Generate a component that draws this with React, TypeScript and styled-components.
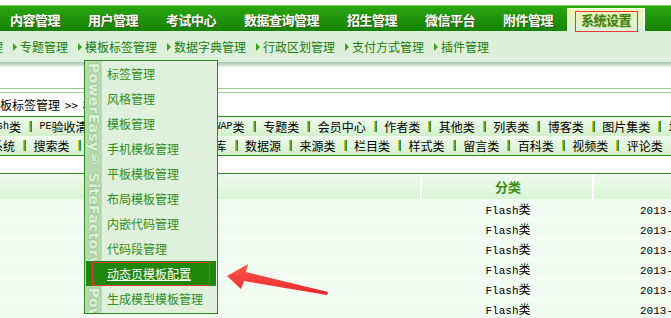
import React from "react";
import styled, { createGlobalStyle } from "styled-components";

const GlobalStyle = createGlobalStyle`
    html, body {
        margin: 0;
        padding: 0;
        background: #fff;
        overflow: hidden;
    }
    body {
        font-family: "Noto Sans CJK SC", "Liberation Sans", sans-serif;
        font-size: 12px;
        color: #000;
    }
`;

const NAV_ITEMS = ["内容管理", "用户管理", "考试中心", "数据查询管理", "招生管理", "微信平台", "附件管理", "系统设置"];
const SUB_ITEMS = ["专题管理", "模板标签管理", "数据字典管理", "行政区划管理", "支付方式管理", "插件管理"];
const TAB_ROW_1 = ["Flash类", "PE验收清单", "CSS样式模板类", "WAP类", "专题类", "会员中心", "作者类", "其他类", "列表类", "博客类", "图片集类", "地区类"];
const TAB_ROW_2 = ["会员系统", "搜索类", "问卷调查类", "短信接口库", "数据源", "来源类", "栏目类", "样式类", "留言类", "百科类", "视频类", "评论类", "标签类"];
const MENU_ITEMS = [
    "标签管理",
    "风格管理",
    "模板管理",
    "手机模板管理",
    "平板模板管理",
    "布局模板管理",
    "内嵌代码管理",
    "代码段管理",
    "动态页模板配置",
    "生成模型模板管理",
];

// 拉丁字符用等宽字体（宋体效果）
const withMono = (text: string, size: number) => {
    const m = text.match(/^([A-Za-z]+)(.*)$/);
    if (!m) return text;
    return (
        <>
            <Mono $size={size}>{m[1]}</Mono>
            {m[2]}
        </>
    );
};

const App = () => {
    return (
        <Page>
            <GlobalStyle />
            <TopNav>
                <NavList>
                    {NAV_ITEMS.map((item) => (
                        <NavItem key={item} $active={item === "系统设置"}>
                            {item}
                        </NavItem>
                    ))}
                </NavList>
            </TopNav>
            <SubBar>
                <SubLead>管理</SubLead>
                {SUB_ITEMS.map((item) => (
                    <SubItem key={item}>
                        <SubArrow />
                        {item}
                    </SubItem>
                ))}
            </SubBar>
            <SubShadow />
            <Spacer $h={21} />
            <DoubleLine />
            <Crumb>模板标签管理 &gt;&gt; 标签管理</Crumb>
            <TabBox>
                <TabRow $offset={-21}>
                    {TAB_ROW_1.map((t) => (
                        <TabItem key={t}>
                            {withMono(t, 10)}
                            <TabSep />
                        </TabItem>
                    ))}
                </TabRow>
                <TabRow $offset={-33}>
                    {TAB_ROW_2.map((t) => (
                        <TabItem key={t}>
                            {t}
                            <TabSep />
                        </TabItem>
                    ))}
                </TabRow>
            </TabBox>
            <Spacer $h={17} />
            <Table>
                <HeadRow>
                    <HeadCell />
                    <HeadCell>分类</HeadCell>
                    <HeadCell />
                </HeadRow>
                {[0, 1, 2, 3, 4, 5].map((i) => (
                    <DataRow key={i}>
                        <DataCell />
                        <DataCell>{withMono("Flash类", 11)}</DataCell>
                        <DateCell>
                            <Mono $size={11}>2013-11-12 10:30</Mono>
                        </DateCell>
                    </DataRow>
                ))}
            </Table>

            <DropMenu>
                <Brand>PowerEasy® SiteFactory™ PowerEasy® SiteFactory™</Brand>
                <MenuList>
                    {MENU_ITEMS.map((item) => (
                        <MenuItem key={item} $current={item === "动态页模板配置"}>
                            {item}
                        </MenuItem>
                    ))}
                </MenuList>
            </DropMenu>

            <Arrow width="106" height="36" viewBox="0 0 106 36">
                <defs>
                    <linearGradient id="arrowFill" x1="0" y1="0" x2="0" y2="1">
                        <stop offset="0" stopColor="#ff5a4a" />
                        <stop offset="1" stopColor="#e8262a" />
                    </linearGradient>
                </defs>
                <polygon points="1,14 22,2 20,10 102,30 101,33 18,19 15,27" fill="url(#arrowFill)" />
            </Arrow>
        </Page>
    );
};

const Page = styled.div`
    position: relative;
    width: 671px;
    height: 318px;
    overflow: hidden;
`;

const Mono = styled.span<{ $size: number }>`
    font-family: "Liberation Mono", "DejaVu Sans Mono", monospace;
    font-size: ${(p) => p.$size}px;
`;

const Spacer = styled.div<{ $h: number }>`
    height: ${(p) => p.$h}px;
`;

/* ---------- 顶部主导航 ---------- */
const TopNav = styled.div`
    margin-top: 5px;
    height: 25px;
    border-top: 1px solid #79cf58;
    background: linear-gradient(#2ba712, #1f930a 50%, #178306);
    display: flex;
    align-items: flex-end;
`;

const NavList = styled.div`
    display: flex;
    align-items: flex-end;
    margin-left: -4px;
`;

const NavItem = styled.div<{ $active?: boolean }>`
    position: relative;
    height: 22px;
    line-height: 22px;
    padding: 0 13px;
    border: 1px solid transparent;
    border-bottom: none;
    font-size: 13px;
    font-weight: 700;
    letter-spacing: -0.5px;
    white-space: nowrap;
    color: ${(p) => (p.$active ? "#3f7f0e" : "#fff")};
    text-shadow: ${(p) => (p.$active ? "1px 1px 0 #c8dca0" : "1px 1px 0 #3a5a18")};
    background: ${(p) => (p.$active ? "linear-gradient(#eef7b2, #e2f1c8 55%, #ddf0da)" : "transparent")};
    border-color: ${(p) => (p.$active ? "#fff" : "transparent")};

    ${(p) =>
        p.$active &&
        `
        &::after {
            content: "";
            position: absolute;
            left: 7px;
            right: 6px;
            top: 2px;
            bottom: -1px;
            border: 1.5px solid #e8383a;
        }
    `}
`;

/* ---------- 二级菜单 ---------- */
const SubBar = styled.div`
    height: 31px;
    background: #ddf0da;
    display: flex;
    align-items: center;
    white-space: nowrap;
    color: #217c0e;
    font-size: 12px;
`;

const SubLead = styled.span`
    margin-left: -21px;
`;

const SubItem = styled.span`
    display: inline-flex;
    align-items: center;
    margin-left: 10px;
`;

const SubArrow = styled.span`
    width: 0;
    height: 0;
    border-top: 4px solid transparent;
    border-bottom: 4px solid transparent;
    border-left: 4px solid #3da21a;
    margin-right: 3px;
`;

const SubShadow = styled.div`
    height: 5px;
    background: linear-gradient(#a5c5b0, #c9ddcf 60%, #eef5ef);
`;

const DoubleLine = styled.div`
    height: 3px;
    border-top: 1px solid #94cc84;
    border-bottom: 1px solid #a8d89c;
`;

const Crumb = styled.div`
    height: 23px;
    line-height: 23px;
    margin-left: -12px;
    white-space: nowrap;
    font-size: 12px;
    word-spacing: 2px;
    color: #000;
`;

/* ---------- 标签分类 ---------- */
const TabBox = styled.div`
    border-top: 1px solid #2a8a1a;
    border-bottom: 1px solid #2a8a1a;
`;

const TabRow = styled.div<{ $offset: number }>`
    height: 19px;
    display: flex;
    align-items: center;
    white-space: nowrap;
    margin-left: ${(p) => p.$offset}px;
    background: linear-gradient(#f1fbee, #e3f6dd 50%, #d3efcb);
`;

const TabItem = styled.span`
    display: inline-flex;
    align-items: center;
    flex: none;
    font-size: 12px;
    color: #000;
`;

const TabSep = styled.span`
    width: 3px;
    height: 11px;
    margin: 0 7.5px 0 8px;
    background: linear-gradient(to right, #c9c20a 0 1px, #6aa62a 1px 2px, #178a7a 2px);
`;

/* ---------- 列表 ---------- */
const Table = styled.div`
    border-top: 1px solid #2a8a1a;
    width: 800px;
`;

const HeadRow = styled.div`
    display: grid;
    grid-template-columns: 422px 172px 206px;
    height: 25px;
    background: linear-gradient(#eefaec, #e6f8e2 50%, #d6f5d0);
`;

const HeadCell = styled.div`
    box-shadow: inset -2px 0 0 #fff;
    text-align: center;
    line-height: 25px;
    font-size: 13px;
    font-weight: 700;
    color: #3a8f10;
`;

const DataRow = styled.div`
    display: grid;
    grid-template-columns: 422px 172px 206px;
    height: 19px;
    border-bottom: 1px solid #fbfffb;
    background: #f1fbf1;
`;

const DataCell = styled.div`
    text-align: center;
    line-height: 19px;
    font-size: 12px;
    color: #000;
    white-space: nowrap;
`;

const DateCell = styled(DataCell)`
    text-align: left;
    padding-left: 46px;
`;

/* ---------- 下拉菜单 ---------- */
const DropMenu = styled.div`
    position: absolute;
    left: 84px;
    top: 60px;
    width: 132px;
    height: 252px;
    border: 1px solid #2b8a1b;
    background: linear-gradient(to right, #b7d9b1 0 17px, #dff0dc 17px);
    overflow: hidden;
`;

const Brand = styled.div`
    position: absolute;
    left: 0;
    top: 2px;
    width: 17px;
    writing-mode: vertical-rl;
    white-space: nowrap;
    font-family: "DejaVu Sans", sans-serif;
    font-size: 14px;
    line-height: 17px;
    font-weight: 700;
    letter-spacing: 0.3px;
    color: #dcefd8;
    text-shadow: 1px 0 0 #9ccb94, -1px 0 0 #9ccb94, 0 1px 0 #9ccb94, 0 -1px 0 #9ccb94;
`;

const MenuList = styled.div`
    position: relative;
    display: flex;
    flex-direction: column;
`;

const MenuItem = styled.div<{ $current?: boolean }>`
    position: relative;
    height: 25px;
    line-height: 25px;
    margin: 0 1px;
    padding-left: 21px;
    font-size: 12px;
    white-space: nowrap;
    color: ${(p) => (p.$current ? "#fff" : "#2f8f1a")};
    text-decoration: ${(p) => (p.$current ? "underline" : "none")};
    background: ${(p) => (p.$current ? "#1f870b" : "transparent")};

    ${(p) =>
        p.$current &&
        `
        &::after {
            content: "";
            position: absolute;
            left: 6px;
            right: 6px;
            top: 1px;
            bottom: 0;
            border: 1.5px solid #e8383a;
        }
    `}
`;

const Arrow = styled.svg`
    position: absolute;
    left: 226px;
    top: 262px;
`;

export default App;
